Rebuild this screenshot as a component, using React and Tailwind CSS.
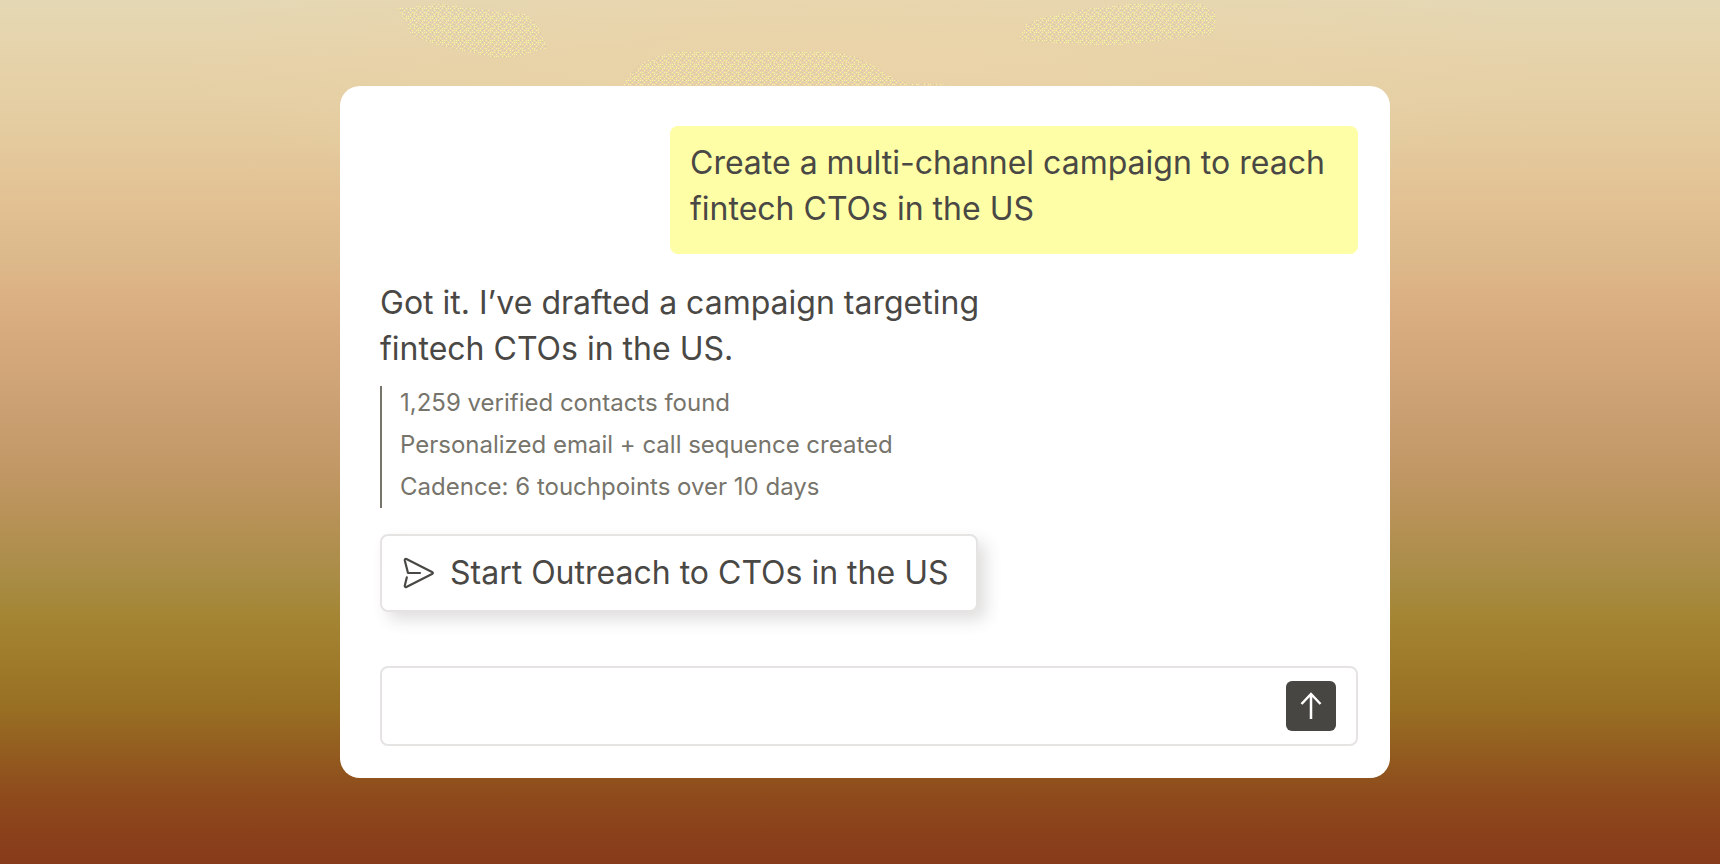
import { useState } from "react";

const FINDINGS = [
  "1,259 verified contacts found",
  "Personalized email + call sequence created",
  "Cadence: 6 touchpoints over 10 days",
];

const GLOW =
  "radial-gradient(ellipse 40% 18% at 50% 7%, rgba(236,212,168,0.8), rgba(236,212,168,0))";

const SKY =
  "linear-gradient(to bottom, #e4d8b4 0%, #e6d3ab 6%, #e4cb9e 16%, #e2c092 24%, #dcb98a 30%, #ddb587 32%, #d8ab7e 38%, #cba174 47%, #c29866 54%, #b79257 60%, #a98c45 67%, #a48635 71%, #9f7c2b 76%, #986f23 82%, #92591f 88%, #8d481b 93%, #8a401b 97%, #883b1a 100%)";

// one row per line of the tile: y = yellow, p = pale pink, g = green
const GRAIN = [
  "y.p.y.y.p.g.",
  "............",
  "p.y.g.y.y.p.",
  ".......p....",
  "y.y.p.y.g.y.",
  "..g.........",
  "y.p.y.p.y.y.",
  "............",
  "g.y.y.y.p.y.",
  ".....p......",
  "p.y.p.g.y.p.",
  "............",
];

const GRAIN_COLORS = { y: "#f6f69c", p: "#dcc4bc", g: "#cdd092" };

const PATCHES = [
  "M398 8 L440 4 L490 10 L526 14 L538 26 L548 48 L520 56 L496 58 L440 46 L412 36 Z",
  "M1040 18 L1090 8 L1130 4 L1200 4 L1216 12 L1214 34 L1186 38 L1110 46 L1070 44 L1018 40 L1026 24 Z",
  "M622 90 C628 68 650 52 690 51 L830 52 C866 54 876 70 902 82 L1000 88 L1000 92 Z",
];

function Backdrop() {
  return (
    <svg
      className="absolute inset-0 h-full w-full"
      viewBox="0 0 1720 864"
      preserveAspectRatio="none"
      aria-hidden="true"
    >
      <defs>
        <pattern id="grain" width="12" height="12" patternUnits="userSpaceOnUse">
          {GRAIN.map((row, y) =>
            row
              .split("")
              .map((dot, x) =>
                dot === "." ? null : (
                  <rect
                    key={`${x}-${y}`}
                    x={x}
                    y={y}
                    width="1"
                    height="1"
                    fill={GRAIN_COLORS[dot]}
                  />
                )
              )
          )}
        </pattern>
      </defs>
      {PATCHES.map((d) => (
        <path key={d} d={d} fill="url(#grain)" />
      ))}
    </svg>
  );
}

function SendIcon() {
  return (
    <svg width="32" height="32" viewBox="0 0 32 32" fill="none" aria-hidden="true">
      <path
        d="M18 16H6L2.8 3.4C2.6 2.2 3.4 1.6 4.4 2.1L30 14.9C31.2 15.6 31.2 16.4 30 17.1L4.4 29.9C3.4 30.4 2.6 29.8 2.8 28.6L4.8 20.4"
        stroke="currentColor"
        strokeWidth="2.2"
        strokeLinecap="round"
        strokeLinejoin="round"
      />
    </svg>
  );
}

function ArrowUpIcon() {
  return (
    <svg width="24" height="28" viewBox="0 0 24 28" fill="none" aria-hidden="true">
      <path d="M12 27V2M2.5 12L12 2L21.5 12" stroke="currentColor" strokeWidth="2.5" />
    </svg>
  );
}

export default function App() {
  const [message, setMessage] = useState("");

  return (
    <div
      className="relative flex min-h-screen items-center justify-center overflow-hidden py-8 pl-[10px] font-['Inter',sans-serif] text-[#4a4845]"
      style={{ background: `${GLOW}, ${SKY}` }}
    >
      <Backdrop />
      <main className="relative flex w-full max-w-[1050px] flex-col rounded-[20px] bg-white pt-10 pr-8 pb-8 pl-10">
        <div className="max-w-[688px] self-end rounded-lg bg-[#fdfea6] px-5 pt-[14px] pb-[22px] text-[32px] leading-[46px]">
          <p>Create a multi-channel campaign to reach fintech CTOs in the US</p>
        </div>

        <p className="mt-[26px] max-w-[640px] text-[32px] leading-[46px]">
          Got it. I’ve drafted a campaign targeting fintech CTOs in the US.
        </p>

        <ul className="mt-[14px] flex flex-col gap-2 border-l-2 border-[#76746b] pb-1 pl-[18px] text-2xl leading-[34px] text-[#76746b]">
          {FINDINGS.map((item) => (
            <li key={item}>{item}</li>
          ))}
        </ul>

        <button
          type="button"
          className="mt-[26px] flex h-[78px] items-center gap-4 self-start rounded-lg border-2 border-[#e5e4e2] bg-white pr-7 pl-5 text-[32px] shadow-[8px_8px_16px_rgba(60,56,50,0.16)]"
        >
          <SendIcon />
          Start Outreach to CTOs in the US
        </button>

        <form
          className="mt-[54px] flex h-20 items-center rounded-lg border-2 border-[#e5e4e2] px-5"
          onSubmit={(e) => e.preventDefault()}
        >
          <input
            type="text"
            aria-label="Message"
            value={message}
            onChange={(e) => setMessage(e.target.value)}
            className="min-w-0 flex-1 text-2xl outline-none"
          />
          <button
            type="submit"
            aria-label="Send"
            className="flex size-[50px] items-center justify-center rounded-md bg-[#484643] text-white"
          >
            <ArrowUpIcon />
          </button>
        </form>
      </main>
    </div>
  );
}
